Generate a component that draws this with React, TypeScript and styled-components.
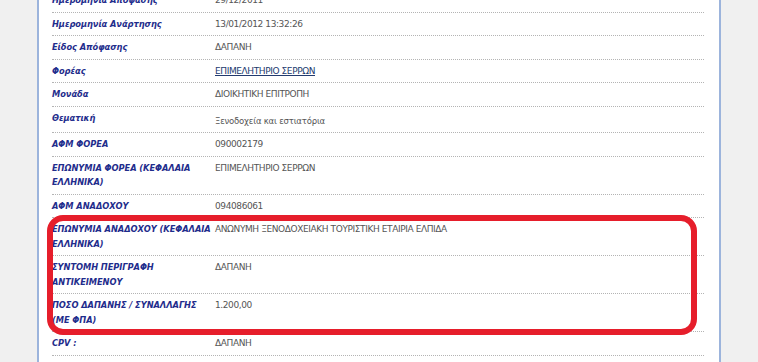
import React from "react";
import styled, { createGlobalStyle } from "styled-components";

const GlobalStyle = createGlobalStyle`
  html, body {
    margin: 0;
    padding: 0;
    background: #f0f0f0;
    overflow: hidden;
  }
`;

type Field = {
  label: string;
  value: string;
  link?: boolean;
  small?: boolean;
};

const before: Field[] = [
  { label: "Ημερομηνία Απόφασης", value: "29/12/2011" },
  { label: "Ημερομηνία Ανάρτησης", value: "13/01/2012 13:32:26" },
  { label: "Είδος Απόφασης", value: "ΔΑΠΑΝΗ" },
  { label: "Φορέας", value: "ΕΠΙΜΕΛΗΤΗΡΙΟ ΣΕΡΡΩΝ", link: true },
  { label: "Μονάδα", value: "ΔΙΟΙΚΗΤΙΚΗ ΕΠΙΤΡΟΠΗ" },
  { label: "Θεματική", value: "Ξενοδοχεία και εστιατόρια", small: true },
  { label: "ΑΦΜ ΦΟΡΕΑ", value: "090002179" },
  { label: "ΕΠΩΝΥΜΙΑ ΦΟΡΕΑ (ΚΕΦΑΛΑΙΑ ΕΛΛΗΝΙΚΑ)", value: "ΕΠΙΜΕΛΗΤΗΡΙΟ ΣΕΡΡΩΝ" },
  { label: "ΑΦΜ ΑΝΑΔΟΧΟΥ", value: "094086061" },
];

const highlighted: Field[] = [
  {
    label: "ΕΠΩΝΥΜΙΑ ΑΝΑΔΟΧΟΥ (ΚΕΦΑΛΑΙΑ ΕΛΛΗΝΙΚΑ)",
    value: "ΑΝΩΝΥΜΗ ΞΕΝΟΔΟΧΕΙΑΚΗ ΤΟΥΡΙΣΤΙΚΗ ΕΤΑΙΡΙΑ ΕΛΠΙΔΑ",
  },
  { label: "ΣΥΝΤΟΜΗ ΠΕΡΙΓΡΑΦΗ ΑΝΤΙΚΕΙΜΕΝΟΥ", value: "ΔΑΠΑΝΗ" },
  { label: "ΠΟΣΟ ΔΑΠΑΝΗΣ / ΣΥΝΑΛΛΑΓΗΣ (ΜΕ ΦΠΑ)", value: "1.200,00" },
];

const after: Field[] = [
  { label: "CPV :", value: "ΔΑΠΑΝΗ" },
  { label: "", value: "" },
];

const FieldRow = ({ field }: { field: Field }) => (
  <Row>
    <Label>{field.label}</Label>
    {field.link ? (
      <Value>
        <ValueLink href="#">{field.value}</ValueLink>
      </Value>
    ) : (
      <Value $small={field.small}>{field.value}</Value>
    )}
  </Row>
);

export default function App() {
  return (
    <>
      <GlobalStyle />
      <Page>
        <Panel>
          <Table>
            {before.map((f, i) => (
              <FieldRow key={"b" + i} field={f} />
            ))}
            <Highlight>
              {highlighted.map((f, i) => (
                <FieldRow key={"h" + i} field={f} />
              ))}
            </Highlight>
            {after.map((f, i) => (
              <FieldRow key={"a" + i} field={f} />
            ))}
          </Table>
        </Panel>
      </Page>
    </>
  );
}

const Page = styled.div`
  width: 758px;
  height: 362px;
  overflow: hidden;
  background: #f0f0f0;
`;

const Panel = styled.div`
  margin-left: 37px;
  width: 680px;
  min-height: 400px;
  background: #ffffff;
  border-left: 2px solid #9cb4dc;
  border-right: 2px solid #9cb4dc;
`;

const Table = styled.div`
  margin-top: -11px;
  padding: 0 15px 0 13px;
  display: flex;
  flex-direction: column;
`;

const Highlight = styled.div`
  position: relative;

  &::after {
    content: "";
    position: absolute;
    top: -3px;
    bottom: -3px;
    left: -5px;
    right: 7px;
    border: 6px solid #e61e2b;
    border-radius: 16px;
    pointer-events: none;
  }
`;

const Row = styled.div`
  display: grid;
  grid-template-columns: 163px 1fr;
  padding: 4px 0;
  min-height: 14.5px;
  border-bottom: 1px dotted #b4b4b4;
`;

const Label = styled.div`
  font-family: "DejaVu Sans Condensed", "DejaVu Sans", Verdana, sans-serif;
  font-size: 9.2px;
  letter-spacing: -0.05px;
  font-weight: bold;
  font-style: italic;
  line-height: 14.5px;
  color: #1f2d8c;
`;

const Value = styled.div<{ $small?: boolean }>`
  font-family: "DejaVu Sans", Tahoma, sans-serif;
  font-size: ${(p) => (p.$small ? "8.5px" : "9px")};
  line-height: 14.5px;
  letter-spacing: ${(p) => (p.$small ? "-0.2px" : "-0.4px")};
  padding-top: ${(p) => (p.$small ? "3px" : "0")};
  color: #555555;
`;

const ValueLink = styled.a`
  color: #223a6e;
  text-decoration: underline;
`;
